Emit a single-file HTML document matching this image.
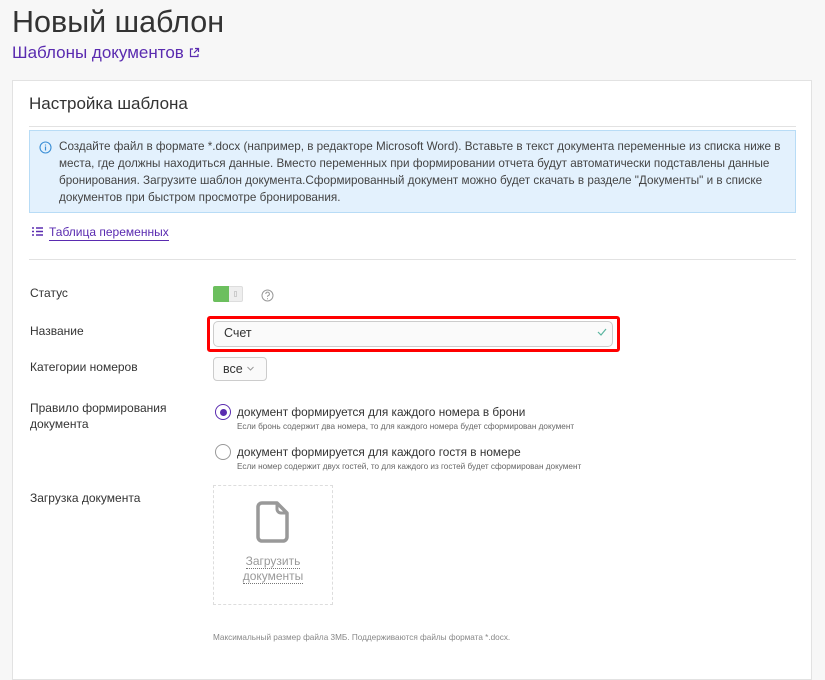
<!DOCTYPE html>
<html><head><meta charset="utf-8"><style>
*{box-sizing:border-box;margin:0;padding:0}
body{width:825px;height:650px;overflow:hidden;background:#f7f7f7;font-family:"Liberation Sans","DejaVu Sans",sans-serif;color:#333;position:relative}
.a{position:absolute;white-space:nowrap}
h1{position:absolute;left:12px;top:5px;font-size:30.5px;font-weight:normal;color:#333}
.card{position:absolute;left:12px;top:80px;width:800px;height:600px;background:#fff;border:1px solid #e2e2e2}
.lbl{font-size:12px;color:#333}
</style></head><body>
<h1>Новый шаблон</h1>
<div class="a" style="left:12px;top:43px;font-size:17px;color:#5a2bb0">Шаблоны документов <svg width="11" height="11" viewBox="0 0 11 11" style="vertical-align:0"><path d="M4 2H1.5v7.5H9V7M6 1.5h3.5V5M9.5 1.5L5 6" fill="none" stroke="#5a2bb0" stroke-width="1.2"/></svg></div>
<div class="card"></div>
<div class="a" style="left:29px;top:94px;font-size:17px;color:#333">Настройка шаблона</div>
<div class="a" style="left:29px;top:126px;width:767px;height:1px;background:#e2e2e2"></div>
<div class="a" style="left:29px;top:130px;width:767px;height:83px;background:#e3f1fd;border:1px solid #b8dcf6"></div>
<svg class="a" style="left:39px;top:141px" width="13" height="13" viewBox="0 0 13 13"><circle cx="6.5" cy="6.5" r="5.5" fill="none" stroke="#3b8fd6" stroke-width="1.1"/><path d="M6.5 5.5v4M6.5 3.5v1" stroke="#3b8fd6" stroke-width="1.2"/></svg>
<div class="a" style="left:59px;top:138px;font-size:11.7px;line-height:17px;color:#444;white-space:normal;width:732px">Создайте файл в формате *.docx (например, в редакторе Microsoft Word). Вставьте в текст документа переменные из списка ниже в места, где должны находиться данные. Вместо переменных при формировании отчета будут автоматически подставлены данные бронирования. Загрузите шаблон документа.Сформированный документ можно будет скачать в разделе "Документы" и в списке документов при быстром просмотре бронирования.</div>
<svg class="a" style="left:32px;top:227px" width="11" height="9" viewBox="0 0 11 9"><path d="M0 1h2M0 4.5h2M0 8h2M4 1h7M4 4.5h7M4 8h7" stroke="#5a2bb0" stroke-width="1.6"/></svg>
<div class="a" style="left:49px;top:225px;font-size:12px;color:#5a2bb0;border-bottom:1px solid #5a2bb0;line-height:15px">Таблица переменных</div>
<div class="a" style="left:29px;top:259px;width:767px;height:1px;background:#e2e2e2"></div>
<div class="a lbl" style="left:30px;top:286px">Статус</div>
<div class="a" style="left:213px;top:286px;width:30px;height:16px;background:#eee;border:1px solid #ddd;border-radius:2px"></div>
<div class="a" style="left:213px;top:286px;width:16px;height:16px;background:#6cbf5e;border-radius:2px 0 0 2px"></div>
<div class="a" style="left:234px;top:291px;width:3px;height:6px;border:1px solid #ccc"></div>
<svg class="a" style="left:261px;top:289px" width="13" height="13" viewBox="0 0 13 13"><circle cx="6.5" cy="6.5" r="5.5" fill="none" stroke="#999"/><path d="M4.8 5a1.8 1.8 0 1 1 2.4 1.6c-.6.3-.7.6-.7 1.3M6.5 9.2v1" fill="none" stroke="#999"/></svg>
<div class="a lbl" style="left:30px;top:324px">Название</div>
<div class="a" style="left:207px;top:316px;width:413px;height:36px;border:3px solid #f00;border-radius:3px"></div>
<div class="a" style="left:213px;top:321px;width:400px;height:26px;border:1px solid #ccc;border-radius:5px;background:#fafafa"></div>
<div class="a" style="left:224px;top:326px;font-size:12.5px">Счет</div>
<svg class="a" style="left:597px;top:328px" width="10" height="8" viewBox="0 0 10 8"><path d="M1 4l3 3 5-6" fill="none" stroke="#5bb5a0" stroke-width="1.2"/></svg>
<div class="a lbl" style="left:30px;top:360px">Категории номеров</div>
<div class="a" style="left:213px;top:357px;width:54px;height:24px;border:1px solid #ccc;border-radius:4px;background:#fafafa"></div>
<div class="a" style="left:223px;top:362px;font-size:12.5px">все</div>
<svg class="a" style="left:247px;top:366px" width="7" height="5" viewBox="0 0 7 5"><path d="M.5 1l3 3 3-3" fill="none" stroke="#999"/></svg>
<div class="a lbl" style="left:30px;top:400px;line-height:16px">Правило формирования<br>документа</div>
<div class="a" style="left:215px;top:404px;width:16px;height:16px;border:1.5px solid #5a2bb0;border-radius:50%"></div>
<div class="a" style="left:219.5px;top:408.5px;width:7px;height:7px;background:#5a2bb0;border-radius:50%"></div>
<div class="a" style="left:237px;top:405px;font-size:11.8px">документ формируется для каждого номера в брони</div>
<div class="a" style="left:237px;top:422px;font-size:8.2px;color:#666">Если бронь содержит два номера, то для каждого номера будет сформирован документ</div>
<div class="a" style="left:215px;top:444px;width:16px;height:16px;border:1px solid #999;border-radius:50%"></div>
<div class="a" style="left:237px;top:445px;font-size:11.8px">документ формируется для каждого гостя в номере</div>
<div class="a" style="left:237px;top:462px;font-size:8.2px;color:#666">Если номер содержит двух гостей, то для каждого из гостей будет сформирован документ</div>
<div class="a lbl" style="left:30px;top:491px">Загрузка документа</div>
<div class="a" style="left:213px;top:485px;width:120px;height:120px;border:1px dashed #ddd"></div>
<svg class="a" style="left:256px;top:501px" width="35" height="42" viewBox="0 0 35 42"><path d="M6 2h15l10 10v24a4 4 0 0 1-4 4H6a4 4 0 0 1-4-4V6a4 4 0 0 1 4-4z" fill="none" stroke="#999" stroke-width="3.5" stroke-linejoin="round"/><path d="M21 2v6a4 4 0 0 0 4 4h6" fill="none" stroke="#999" stroke-width="3"/></svg>
<div class="a" style="left:213px;top:554px;width:120px;text-align:center;font-size:12px;color:#999;line-height:15px;white-space:normal"><span style="border-bottom:1px dotted #777">Загрузить</span><br><span style="border-bottom:1px dotted #777">документы</span></div>
<div class="a" style="left:213px;top:633px;font-size:8.2px;color:#888">Максимальный размер файла 3МБ. Поддерживаются файлы формата *.docx.</div>
</body></html>
